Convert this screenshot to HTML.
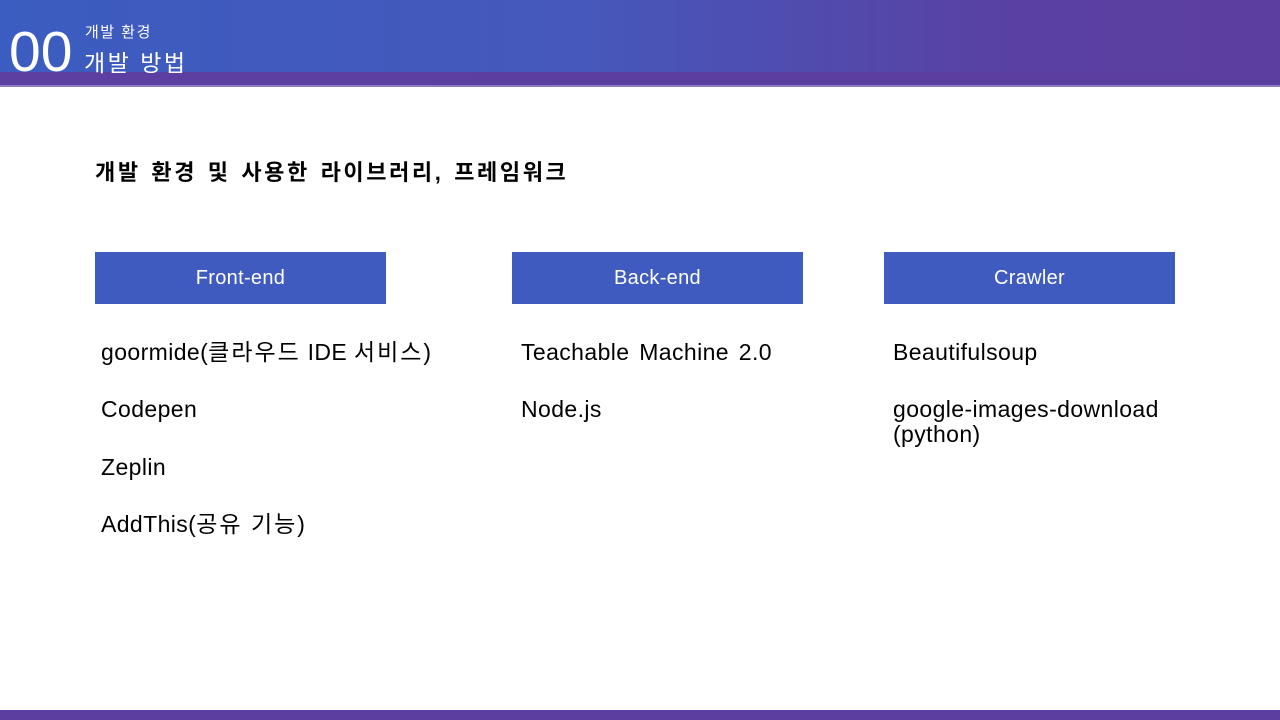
<!DOCTYPE html>
<html><head><meta charset="utf-8"><style>
body{margin:0;width:1280px;height:720px;position:relative;background:#fff;overflow:hidden;font-family:"Liberation Sans","Noto Sans CJK KR",sans-serif}
.hd{position:absolute;left:0;top:0;width:1280px;height:85px;background:linear-gradient(90deg,#3b5cc0 0%,#4658bb 45%,#5a40a2 80%,#5c3ea0 100%)}
.strip{position:absolute;left:0;top:72px;width:1280px;height:13px;background:linear-gradient(90deg,#5d3fa1,#5c3ea0)}
.line{position:absolute;left:0;top:85px;width:1280px;height:2px;background:#8a7cc4}
.num{position:absolute;left:9px;top:20px;color:#fff;font-size:57px;line-height:64px;font-weight:300}
.t1{position:absolute;left:85px;top:21px;color:#fff;font-size:15px;letter-spacing:1.5px}
.t2{position:absolute;left:84px;top:44px;color:#fff;font-size:23px;letter-spacing:2.5px}
.h{position:absolute;left:95px;top:155px;font-size:22px;font-weight:bold;color:#000;letter-spacing:2.6px;word-spacing:2px}
.box{position:absolute;top:252px;height:52px;width:291px;background:#3f5bbf;color:#fff;font-size:20px;text-align:center;line-height:52px;letter-spacing:0.3px}
.it{position:absolute;font-size:23px;color:#000;line-height:25px;letter-spacing:0.4px}
.k{letter-spacing:2px}
.bt{position:absolute;left:0;top:710px;width:1280px;height:10px;background:#5c3ea0}
</style></head><body>
<div class="hd"></div><div class="strip"></div><div class="line"></div>
<div class="num">00</div>
<div class="t1">개발 환경</div>
<div class="t2">개발 방법</div>
<div class="h">개발 환경 및 사용한 라이브러리, 프레임워크</div>
<div class="box" style="left:95px">Front-end</div>
<div class="box" style="left:512px">Back-end</div>
<div class="box" style="left:884px">Crawler</div>
<div class="it" style="left:101px;top:340px">goormide(<span class="k">클라우드</span> IDE <span class="k">서비스</span>)</div>
<div class="it" style="left:101px;top:397px">Codepen</div>
<div class="it" style="left:101px;top:455px">Zeplin</div>
<div class="it" style="left:101px;top:512px">AddThis(<span class="k">공유 기능</span>)</div>
<div class="it" style="left:521px;top:340px;word-spacing:3px">Teachable Machine 2.0</div>
<div class="it" style="left:521px;top:397px">Node.js</div>
<div class="it" style="left:893px;top:340px">Beautifulsoup</div>
<div class="it" style="left:893px;top:397px">google-images-download<br>(python)</div>
<div class="bt"></div>
</body></html>
